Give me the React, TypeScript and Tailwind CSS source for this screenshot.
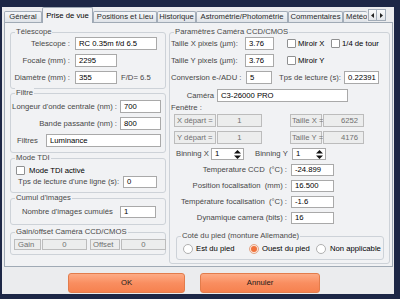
import React from "react";

const FONT = { fontFamily: '"Liberation Sans", Arial, sans-serif' };

type P = { className?: string; children?: React.ReactNode };

const Field = ({ className = "", children }: P) => (
  <div className={`bg-white border border-[#a9a9a9] flex items-center pl-[3px] text-black leading-none whitespace-nowrap overflow-hidden shrink-0 ${className}`}>
    {children}
  </div>
);

const Dis = ({ className = "", children }: P) => (
  <div className={`bg-[#eceded] border border-[#bcbcbc] flex items-center text-[#707070] leading-none whitespace-nowrap shrink-0 ${className}`}>
    {children}
  </div>
);

const Check = () => (
  <div className="w-[9px] h-[9px] bg-white border border-[#8f9091] rounded-[1px] shrink-0" />
);

const Radio = ({ on = false }: { on?: boolean }) =>
  on ? (
    <div className="w-[10px] h-[10px] rounded-full border border-[#e2a688] bg-[#fde6da] flex items-center justify-center shrink-0">
      <div className="w-[6px] h-[6px] rounded-full bg-[#f0733c]" />
    </div>
  ) : (
    <div className="w-[10px] h-[10px] rounded-full border border-[#b0b0b0] bg-white shrink-0" />
  );

const Group = ({ title, className = "", children }: P & { title: string }) => (
  <div className={`relative border border-[#cdd2d8] rounded-[3px] shrink-0 ${className}`}>
    <span className="absolute -top-[6px] left-[4px] px-[1px] bg-[#f1f2f4] leading-[10px] text-[#4a4a4a] whitespace-nowrap">
      {title}
    </span>
    {children}
  </div>
);

const Lbl = ({ className = "", children }: P) => (
  <div className={`leading-none text-[#474747] whitespace-nowrap shrink-0 ${className}`}>{children}</div>
);

const Spin = ({ className = "" }: P) => (
  <div className={`bg-white border border-[#a9a9a9] flex items-center pl-[3px] pr-[2px] text-black leading-none shrink-0 ${className}`}>
    <span className="flex-1">1</span>
    <svg width="7" height="9" viewBox="0 0 7 9">
      <polygon points="3.5,0 7,3.5 0,3.5" fill="#111" />
      <polygon points="0,5.5 7,5.5 3.5,9" fill="#111" />
    </svg>
  </div>
);

const Tab = ({ className = "", children }: P) => (
  <div
    className={`h-[11px] border border-b-0 border-[#a3adb9] rounded-t-[2px] bg-gradient-to-b from-[#f5f7f9] to-[#dfe3e8] flex items-center justify-center text-[#2a2a2a] leading-none whitespace-nowrap shrink-0 ${className}`}
  >
    {children}
  </div>
);

export default function App() {
  return (
    <div className="w-[400px] h-[299px] bg-[#1d2746] overflow-hidden text-[7.7px]" style={FONT}>
      <div className="h-[7px]" />
      <div className="ml-[2px] w-[392px] h-[287px] bg-[#ebecee] flex flex-col">
        {/* Tabs */}
        <div className="h-[15px] flex items-end pl-[2px] shrink-0">
          <Tab className="w-[38px]">Général</Tab>
          <div className="w-[51px] h-[16px] -mb-px relative z-10 border border-b-0 border-[#9ea8b4] rounded-t-[2px] bg-[#f1f2f4] flex items-center justify-center text-black leading-none whitespace-nowrap shrink-0">
            Prise de vue
          </div>
          <Tab className="w-[64px]">Positions et Lieu</Tab>
          <Tab className="w-[39px]">Historique</Tab>
          <Tab className="w-[92px]">Astrométrie/Photométrie</Tab>
          <Tab className="w-[55px]">Commentaires</Tab>
          <Tab className="w-[24px] !justify-start pl-[2px] overflow-hidden border-r-0">Météo</Tab>
          <div className="ml-[1px] mb-[1px] flex shrink-0">
            <div className="w-[9px] h-[12px] border border-[#a3adb9] bg-gradient-to-b from-[#fafbfc] to-[#e3e6ea] flex items-center justify-center">
              <svg width="3" height="5" viewBox="0 0 3 5"><polygon points="3,0 3,5 0,2.5" fill="#222" /></svg>
            </div>
            <div className="w-[9px] h-[12px] border border-l-0 border-[#a3adb9] bg-gradient-to-b from-[#fafbfc] to-[#e3e6ea] flex items-center justify-center">
              <svg width="3" height="5" viewBox="0 0 3 5"><polygon points="0,0 0,5 3,2.5" fill="#222" /></svg>
            </div>
          </div>
        </div>

        {/* Page */}
        <div className="ml-[2px] w-[389px] h-[245px] border border-[#a0aab5] bg-[#f1f2f4] flex pl-[5px] pr-[2px] shrink-0">
          {/* Left column */}
          <div className="w-[156px] flex flex-col">
            <Group title="Télescope" className="mt-[9px] h-[57px] pt-[4px]">
              <div className="flex items-center h-[13px]">
                <Lbl className="w-[59px] text-right">Telescope :</Lbl>
                <Field className="ml-[5px] w-[82px] h-[13px]">RC 0.35m f/d 6.5</Field>
              </div>
              <div className="flex items-center h-[13px] mt-[4px]">
                <Lbl className="w-[59px] text-right">Focale (mm) :</Lbl>
                <Field className="ml-[5px] w-[42px] h-[13px]">2295</Field>
              </div>
              <div className="flex items-center h-[13px] mt-[4px]">
                <Lbl className="w-[59px] text-right">Diamètre (mm) :</Lbl>
                <Field className="ml-[5px] w-[42px] h-[13px]">355</Field>
                <Lbl className="ml-[4px]">F/D= 6.5</Lbl>
              </div>
            </Group>

            <Group title="Filtre" className="mt-[4px] h-[60px] pt-[6px]">
              <div className="flex items-center h-[13px]">
                <Lbl className="w-[106px] text-right">Longeur d'onde centrale (nm) :</Lbl>
                <Field className="ml-[3px] w-[41px] h-[13px]">700</Field>
              </div>
              <div className="flex items-center h-[13px] mt-[4px]">
                <Lbl className="w-[106px] text-right">Bande passante (nm) :</Lbl>
                <Field className="ml-[3px] w-[41px] h-[13px]">800</Field>
              </div>
              <div className="flex items-center h-[13px] mt-[4px] pl-[6px]">
                <Lbl className="w-[29px]">Filtres</Lbl>
                <Field className="w-[115px] h-[13px]">Luminance</Field>
              </div>
            </Group>

            <Group title="Mode TDI" className="mt-[5px] h-[35px] pt-[7px]">
              <div className="flex items-center h-[9px] pl-[5px]">
                <Check />
                <span className="ml-[4px] leading-none text-black">Mode TDI activé</span>
              </div>
              <div className="flex items-center h-[12px] mt-[1px] pl-[7px]">
                <Lbl className="w-[105px]">Tps de lecture d'une ligne (s):</Lbl>
                <Field className="w-[34px] h-[12px]">0</Field>
              </div>
            </Group>

            <Group title="Cumul d'images" className="mt-[5px] h-[27px] pt-[7px]">
              <div className="flex items-center h-[12px] pl-[11px]">
                <Lbl className="w-[98px]">Nombre d'images cumulés</Lbl>
                <Field className="w-[36px] h-[12px]">1</Field>
              </div>
            </Group>

            <Group title="Gain/offset Caméra CCD/CMOS" className="mt-[7px] h-[23px] pt-[6px]">
              <div className="flex items-center h-[11px] pl-[3px]">
                <Dis className="w-[27px] h-[11px] pl-[3px]">Gain</Dis>
                <Dis className="ml-[1px] w-[45px] h-[11px] justify-center">0</Dis>
                <Dis className="ml-[3px] w-[30px] h-[11px] pl-[2px]">Offset</Dis>
                <Dis className="ml-[1px] w-[45px] h-[11px] justify-center">0</Dis>
              </div>
            </Group>
          </div>

          {/* Right column */}
          <Group title="Paramètres Caméra CCD/CMOS" className="ml-[3px] mt-[9px] w-[221px] h-[232px] pt-[4px] pl-[1px]">
            <div className="flex items-center h-[13px]">
              <Lbl className="w-[74px]">Taille X pixels (µm):</Lbl>
              <Field className="w-[29px] h-[13px]">3.76</Field>
              <div className="ml-[13px]"><Check /></div>
              <span className="ml-[2px] w-[31px] leading-none text-black whitespace-nowrap">Miroir X</span>
              <div className="ml-[2px]"><Check /></div>
              <span className="ml-[2px] leading-none text-black whitespace-nowrap">1/4 de tour</span>
            </div>
            <div className="flex items-center h-[13px] mt-[4px]">
              <Lbl className="w-[74px]">Taille Y pixels (µm):</Lbl>
              <Field className="w-[29px] h-[13px]">3.76</Field>
              <div className="ml-[13px]"><Check /></div>
              <span className="ml-[2px] leading-none text-black whitespace-nowrap">Miroir Y</span>
            </div>
            <div className="flex items-center h-[13px] mt-[4px]">
              <Lbl className="w-[75px]">Conversion e-/ADU :</Lbl>
              <Field className="w-[26px] h-[13px]">5</Field>
              <Lbl className="ml-[7px] w-[65px]">Tps de lecture (s):</Lbl>
              <Field className="w-[35px] h-[13px]">0.22391</Field>
            </div>
            <div className="flex items-center h-[13px] mt-[5px]">
              <Lbl className="w-[43px] text-right">Caméra</Lbl>
              <Field className="ml-[3px] w-[131px] h-[13px]">C3-26000 PRO</Field>
            </div>
            <div className="h-[9px] mt-[1px] flex items-center">
              <Lbl>Fenêtre :</Lbl>
            </div>
            <div className="flex items-center h-[13px] mt-[2px] pl-[3px]">
              <Dis className="w-[42px] h-[13px] pl-[2px]">X départ =</Dis>
              <Dis className="ml-[1px] w-[45px] h-[13px] justify-center">1</Dis>
              <Dis className="ml-[28px] w-[32px] h-[13px] pl-[1px]">Taille X =</Dis>
              <Dis className="ml-[1px] w-[41px] h-[13px] justify-end pr-[5px]">6252</Dis>
            </div>
            <div className="flex items-center h-[13px] mt-[4px] pl-[3px]">
              <Dis className="w-[42px] h-[13px] pl-[2px]">Y départ =</Dis>
              <Dis className="ml-[1px] w-[45px] h-[13px] justify-center">1</Dis>
              <Dis className="ml-[28px] w-[32px] h-[13px] pl-[1px]">Taille Y =</Dis>
              <Dis className="ml-[1px] w-[41px] h-[13px] justify-end pr-[5px]">4176</Dis>
            </div>
            <div className="flex items-center h-[12px] mt-[4px] pl-[5px]">
              <Lbl className="w-[35px]">Binning X</Lbl>
              <Spin className="w-[33px] h-[12px]" />
              <Lbl className="ml-[11px] w-[37px]">Binning Y</Lbl>
              <Spin className="w-[34px] h-[12px]" />
            </div>
            <div className="flex items-center h-[12px] mt-[4px]">
              <Lbl className="w-[116px] text-right">Temperature CCD&nbsp; (°C) :</Lbl>
              <Field className="ml-[4px] w-[43px] h-[12px]">-24.899</Field>
            </div>
            <div className="flex items-center h-[12px] mt-[4px]">
              <Lbl className="w-[116px] text-right">Position focalisation&nbsp; (mm) :</Lbl>
              <Field className="ml-[4px] w-[43px] h-[12px]">16.500</Field>
            </div>
            <div className="flex items-center h-[12px] mt-[4px]">
              <Lbl className="w-[116px] text-right">Température focalisation&nbsp; (°C) :</Lbl>
              <Field className="ml-[4px] w-[43px] h-[12px]">-1.6</Field>
            </div>
            <div className="flex items-center h-[12px] mt-[4px]">
              <Lbl className="w-[116px] text-right">Dynamique camera (bits) :</Lbl>
              <Field className="ml-[4px] w-[43px] h-[12px]">16</Field>
            </div>
            <Group title="Coté du pied (monture Allemande)" className="mt-[12px] ml-[5px] w-[208px] h-[24px] pt-[7px] pl-[6px]">
              <div className="flex items-center h-[10px]">
                <div className="w-[66px] flex items-center">
                  <Radio />
                  <span className="ml-[3px] leading-none text-black whitespace-nowrap">Est du pied</span>
                </div>
                <div className="w-[67px] flex items-center">
                  <Radio on />
                  <span className="ml-[3px] leading-none text-black whitespace-nowrap">Ouest du pied</span>
                </div>
                <div className="flex items-center">
                  <Radio />
                  <span className="ml-[4px] leading-none text-black whitespace-nowrap">Non applicable</span>
                </div>
              </div>
            </Group>
          </Group>
        </div>

        {/* Buttons */}
        <div className="flex mt-[6px] shrink-0">
          <div className="ml-[66px] w-[117px] h-[20px] rounded-[3px] border border-[#e27c4c] bg-gradient-to-b from-[#fdab85] via-[#f98e60] to-[#f6814f] flex items-center justify-center text-[#1a1a1a] leading-none">
            OK
          </div>
          <div className="ml-[15px] w-[120px] h-[20px] rounded-[3px] border border-[#e27c4c] bg-gradient-to-b from-[#fdab85] via-[#f98e60] to-[#f6814f] flex items-center justify-center text-[#1a1a1a] leading-none">
            Annuler
          </div>
        </div>
      </div>
    </div>
  );
}
